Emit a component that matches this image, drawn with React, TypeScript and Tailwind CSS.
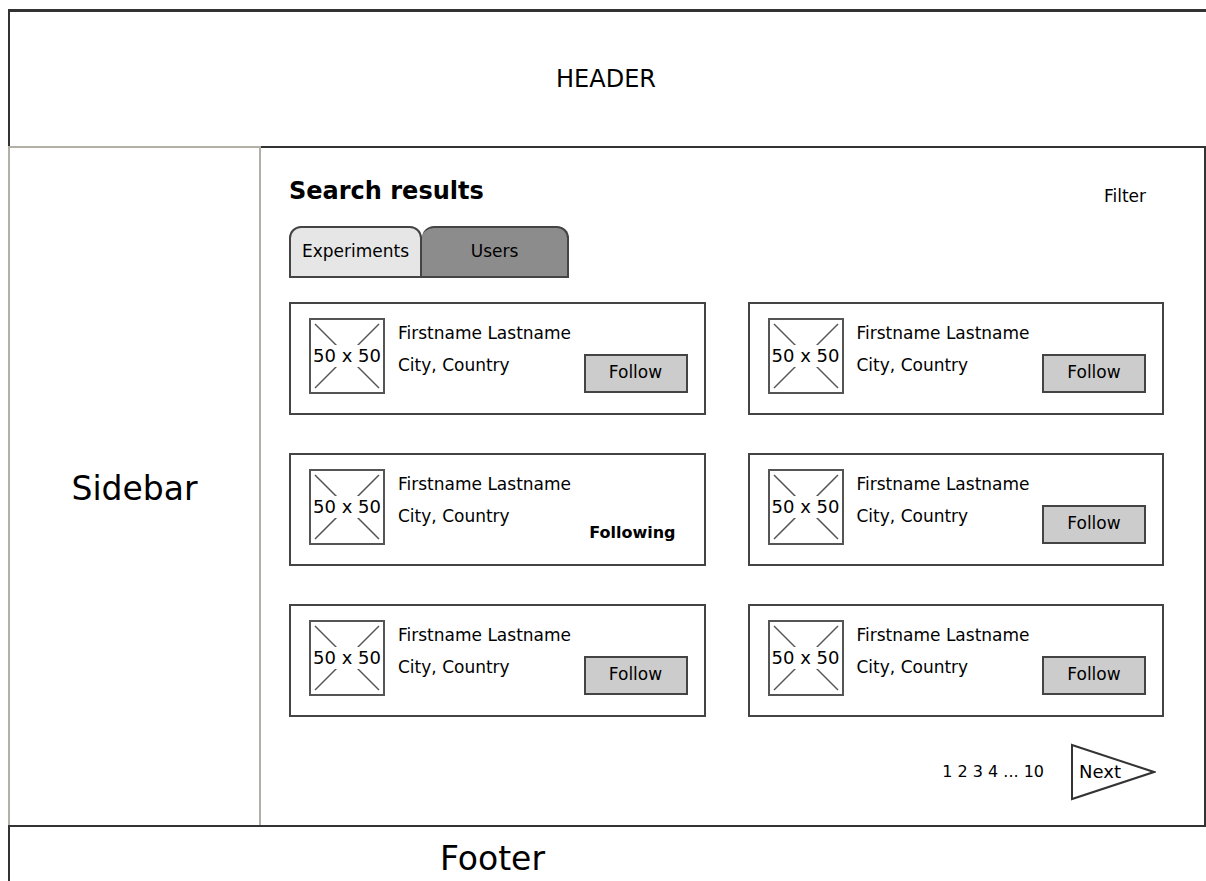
const font = "font-['Comic_Sans_MS','DejaVu_Sans',sans-serif]";

const users = [
  { following: false },
  { following: false },
  { following: true },
  { following: false },
  { following: false },
  { following: false },
];

function Placeholder() {
  return (
    <div className="relative w-[76px] h-[76px] shrink-0 border-2 border-[#555] bg-white">
      <svg className="absolute inset-0" width="72" height="72" viewBox="0 0 72 72">
        <line x1="4" y1="4" x2="68" y2="68" stroke="#555" strokeWidth="1.5" />
        <line x1="68" y1="4" x2="4" y2="68" stroke="#555" strokeWidth="1.5" />
      </svg>
      <div className="absolute inset-0 flex items-center justify-center">
        <span className="bg-white px-[1px] text-[18px] leading-[22px] text-black">50 x 50</span>
      </div>
    </div>
  );
}

function UserCard({ following }: { following: boolean }) {
  return (
    <div className="h-[113px] border-2 border-[#444] bg-white flex pl-[18px] pt-[14px] pr-[16px]">
      <Placeholder />
      <div className="flex-1 pl-[13px] pt-[4px] relative">
        <div className="text-[17px] leading-[22px] text-black">Firstname Lastname</div>
        <div className="text-[17px] leading-[22px] text-black mt-[10px]">City, Country</div>
        <div className="absolute right-0 top-[36px]">
          {following ? (
            <div className="text-[16px] font-bold text-black pt-[16px] pr-[12px]">Following</div>
          ) : (
            <button className="w-[104px] h-[39px] bg-[#cccccc] border-2 border-[#444] text-[17px] text-black">
              Follow
            </button>
          )}
        </div>
      </div>
    </div>
  );
}

export default function App() {
  return (
    <div className={`w-[1206px] h-[881px] bg-white overflow-hidden pl-[8px] pt-[9px] flex flex-col ${font}`}>
      {/* Header */}
      <div className="h-[137px] shrink-0 border-t-[3px] border-l-2 border-[#333] flex items-center justify-center">
        <span className="text-[24px] text-black pr-[4px]">HEADER</span>
      </div>

      <div className="h-[679px] shrink-0 flex">
        {/* Sidebar */}
        <div className="w-[253px] shrink-0 border-t-2 border-l-2 border-r-2 border-[#b3b0a6] flex items-center justify-center">
          <span className="text-[33px] text-black pt-[4px]">Sidebar</span>
        </div>

        {/* Main */}
        <div className="flex-1 border-t-2 border-r-2 border-[#333] pl-[28px] pr-[40px] pt-[28px] flex flex-col">
          <div className="flex items-start justify-between">
            <h1 className="text-[24px] leading-[30px] font-bold text-black">Search results</h1>
            <span className="text-[17px] text-black mt-[8px] mr-[18px]">Filter</span>
          </div>

          <div className="flex mt-[16px]">
            <div className="w-[133px] h-[52px] bg-[#e6e6e6] border-2 border-[#444] rounded-t-[12px] flex items-center justify-center text-[17px] text-black">
              Experiments
            </div>
            <div className="w-[147px] h-[52px] bg-[#8c8c8c] border-2 border-l-0 border-[#444] rounded-t-[12px] flex items-center justify-center text-[17px] text-black">
              Users
            </div>
          </div>

          <div className="grid grid-cols-2 gap-x-[42px] gap-y-[38px] mt-[24px]">
            {users.map((u, i) => (
              <UserCard key={i} following={u.following} />
            ))}
          </div>

          <div className="flex items-center justify-end mt-[26px] pr-[8px]">
            <span className="text-[16px] text-black mr-[26px]">1 2 3 4 ... 10</span>
            <div className="relative w-[86px] h-[58px]">
              <svg width="86" height="58" viewBox="0 0 86 58" className="absolute inset-0">
                <polygon points="2,2 84,29 2,56" fill="white" stroke="#333" strokeWidth="2" />
              </svg>
              <span className="absolute left-[9px] top-[18px] text-[18px] leading-[22px] text-black">Next</span>
            </div>
          </div>
        </div>
      </div>

      {/* Footer */}
      <div className="flex-1 border-t-2 border-l-2 border-[#333] pl-[430px] pt-[12px]">
        <span className="text-[33px] leading-[40px] text-black">Footer</span>
      </div>
    </div>
  );
}
